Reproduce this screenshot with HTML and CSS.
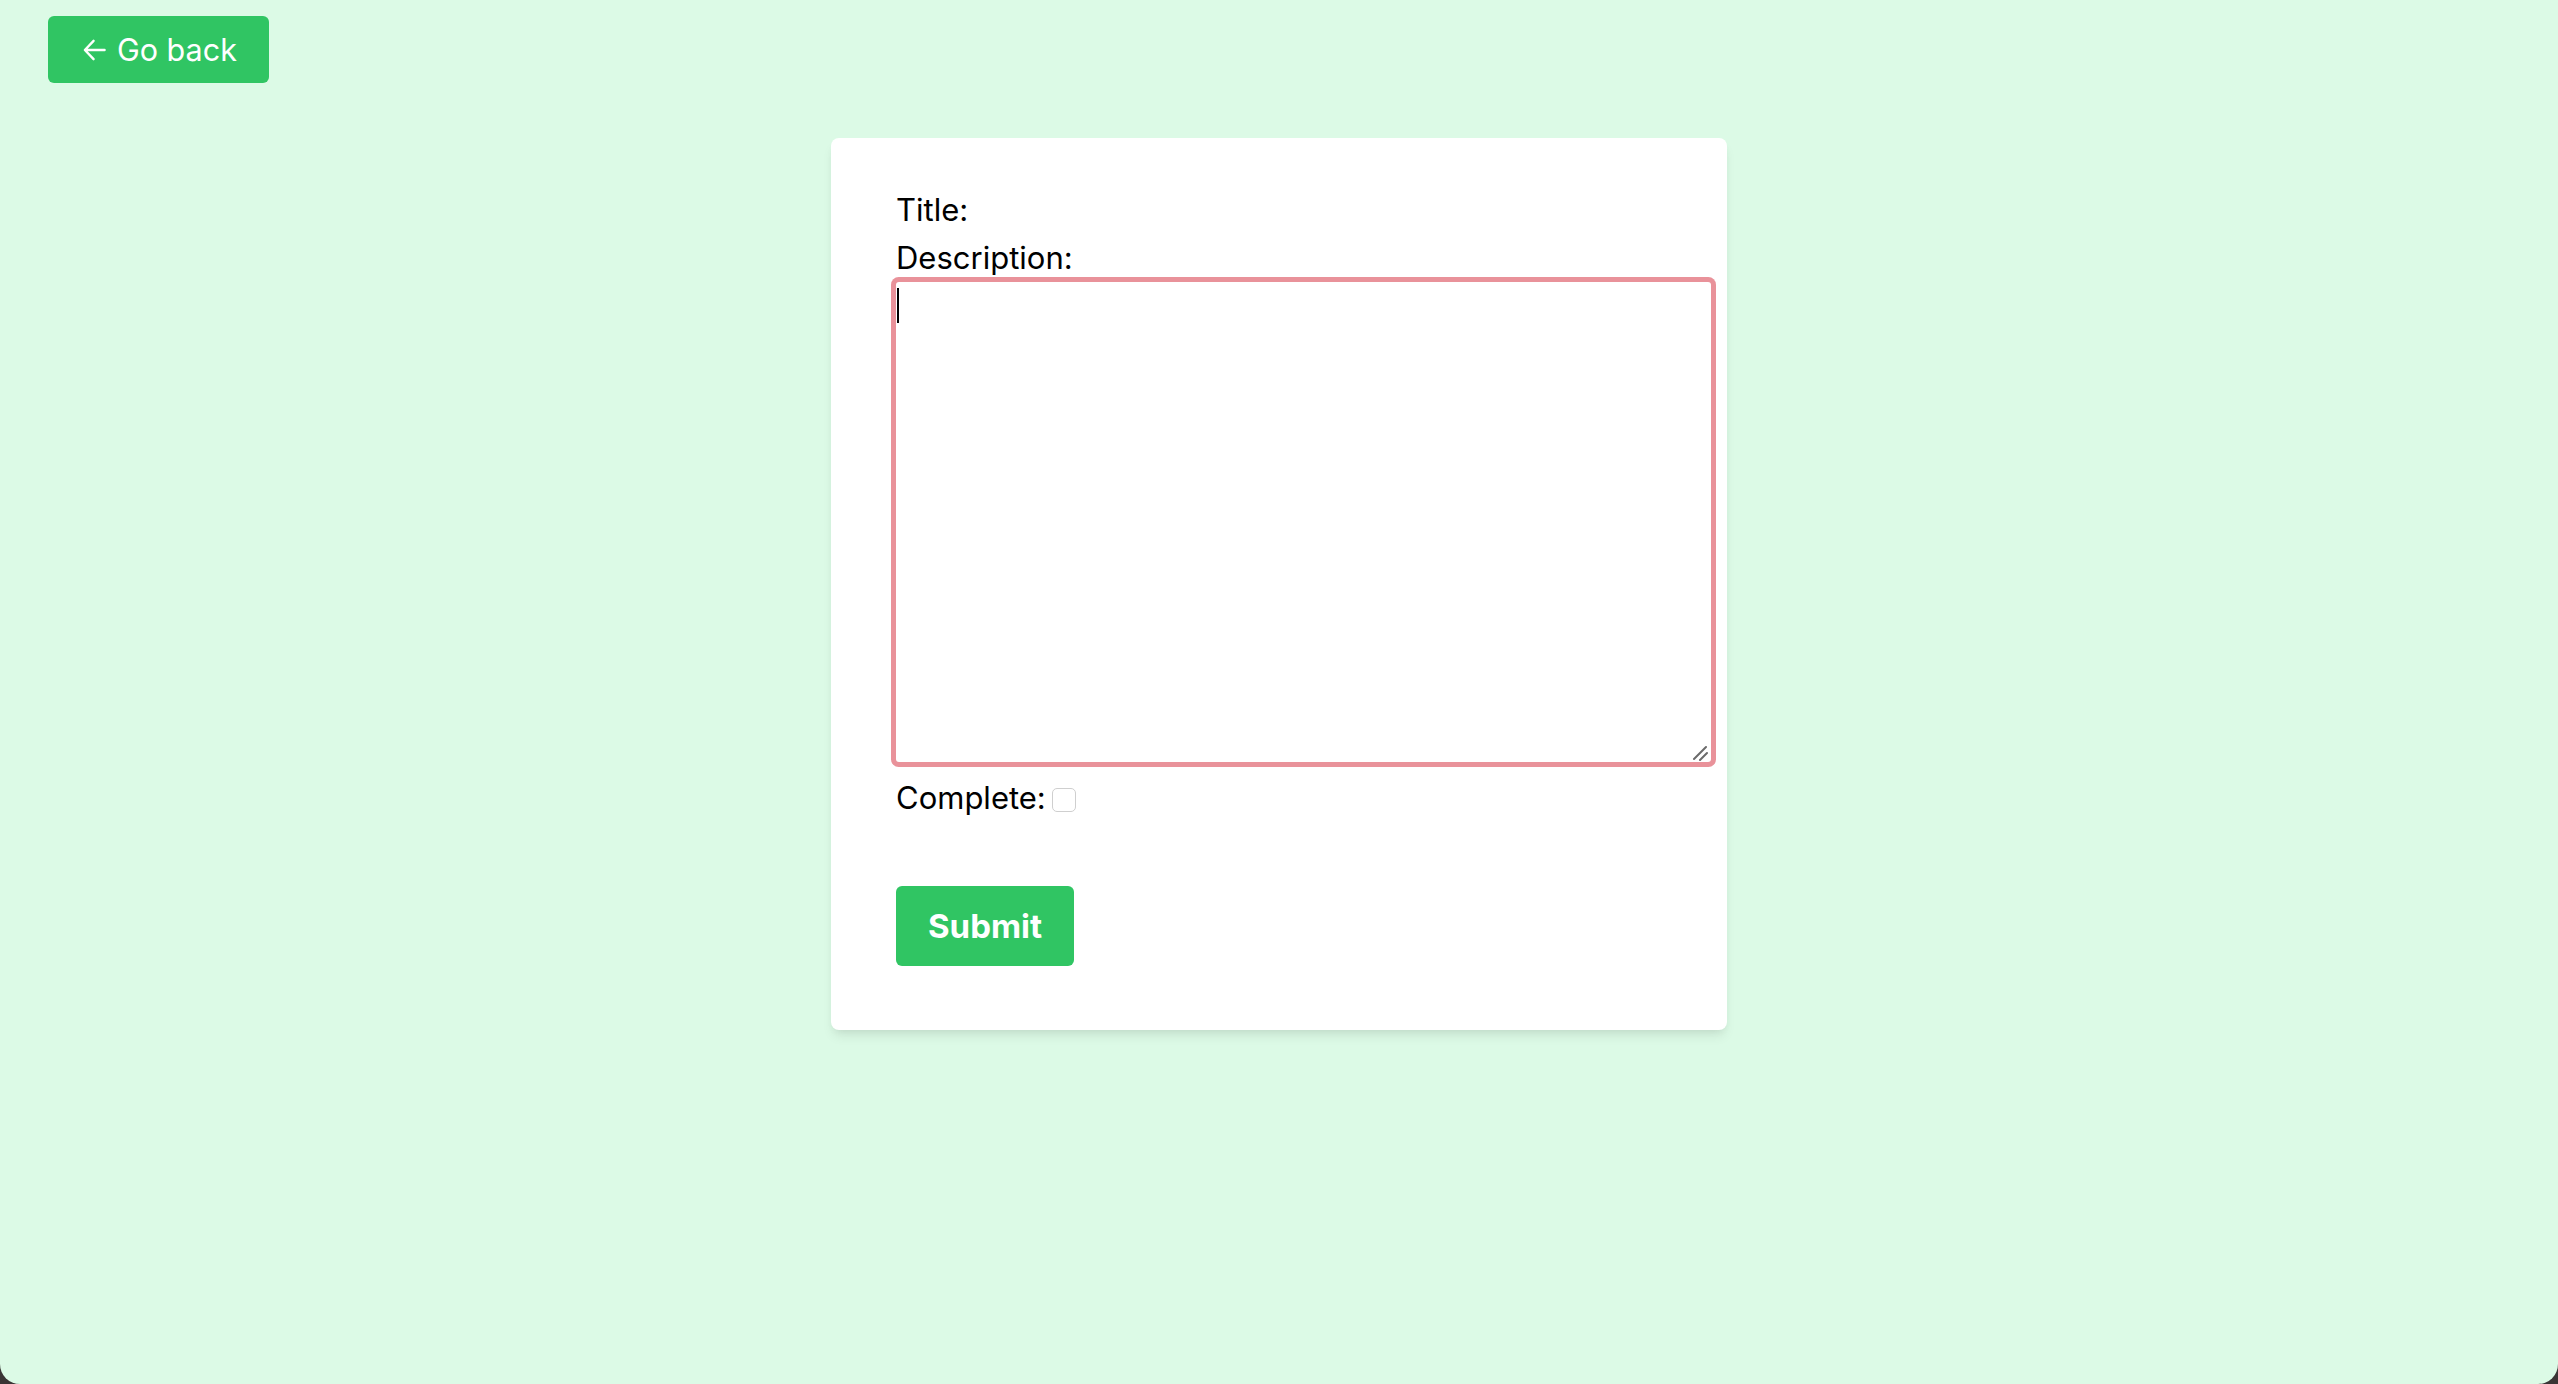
FILE: index.html
```html
<!DOCTYPE html>
<html lang="en">
<head>
<meta charset="utf-8">
<title>Edit todo</title>
<link rel="stylesheet" href="styles.css">
</head>
<body>
<div class="page">
  <header class="topbar">
    <a class="back-btn" href="#">
      <svg class="back-icon" width="24" height="24" viewBox="0 0 24 24" fill="none" stroke="currentColor" stroke-width="2.6" stroke-linecap="round" stroke-linejoin="round"><path d="M11 2 L1.5 12 L11 22 M2 12 H23"/></svg>
      <span>Go back</span>
    </a>
  </header>
  <main class="main">
    <form class="card">
      <div class="label">Title:</div>
      <div class="label">Description:</div>
      <div class="textarea-wrap">
        <textarea class="desc"></textarea>
        <span class="caret"></span>
        <svg class="grip" width="16" height="16" viewBox="0 0 16 16" fill="none" stroke="#6b6b6b" stroke-width="2" stroke-linecap="round"><path d="M2 14 L14 2 M8 15 L15 8"/></svg>
      </div>
      <label class="complete">Complete: <input type="checkbox" class="check"></label>
      <div class="actions">
        <button type="button" class="submit">Submit</button>
      </div>
    </form>
  </main>
</div>
</body>
</html>
```

FILE: styles.css
```css
html {
  background: #3a3535;
  height: 100%;
}
body {
  margin: 0;
  height: 100%;
  font-family: Inter, "Liberation Sans", sans-serif;
  color: #000;
}
.page {
  height: 100%;
  background: #dcfae6;
  border-bottom-left-radius: 20px;
  border-bottom-right-radius: 20px;
  box-sizing: border-box;
  padding: 16px 48px 0;
}
.topbar {
  display: flex;
}
.back-btn {
  display: flex;
  align-items: center;
  gap: 11px;
  background: #30c563;
  color: #fff;
  text-decoration: none;
  font-size: 30.5px;
  line-height: 48px;
  padding: 10px 32px 9px 35px;
  border-radius: 6px;
}
.back-icon {
  width: 23px;
  height: 22px;
}
.main {
  display: flex;
  justify-content: center;
  padding-top: 55px;
}
.card {
  width: 896px;
  box-sizing: border-box;
  background: #fff;
  border-radius: 8px;
  padding: 48px 64px 64px 65px;
  box-shadow: 0 8px 12px -2px rgba(0,0,0,0.08), 0 4px 8px -4px rgba(0,0,0,0.08);
}
.label {
  font-size: 31px;
  line-height: 48px;
}
.textarea-wrap {
  position: relative;
  width: 815px;
  margin-bottom: 12px;
}
.desc {
  display: block;
  width: 815px;
  height: 480px;
  box-sizing: border-box;
  border: none;
  border-radius: 3px;
  margin: 0;
  padding: 0;
  box-shadow: 0 0 0 5px #e9929a;
  outline: none;
  background: #fff;
  font-family: Inter, sans-serif;
  font-size: 31px;
  resize: none;
}
.caret {
  position: absolute;
  left: 1px;
  top: 6px;
  width: 2px;
  height: 35px;
  background: #000;
}
.grip {
  position: absolute;
  right: 3px;
  bottom: 1px;
}
.complete {
  display: flex;
  align-items: center;
  gap: 6px;
  font-size: 31px;
  line-height: 48px;
}
.check {
  appearance: none;
  -webkit-appearance: none;
  width: 24px;
  height: 24px;
  margin: 4px 0 0;
  border: 1.5px solid #cfcfcf;
  border-radius: 5px;
  background: #fff;
  box-sizing: border-box;
}
.actions {
  display: flex;
  margin-top: 64px;
}
.submit {
  background: #30c563;
  color: #fff;
  border: none;
  border-radius: 6px;
  font-family: Inter, sans-serif;
  font-weight: 700;
  font-size: 33px;
  line-height: 56px;
  padding: 12px 32px;
  cursor: pointer;
}
```
